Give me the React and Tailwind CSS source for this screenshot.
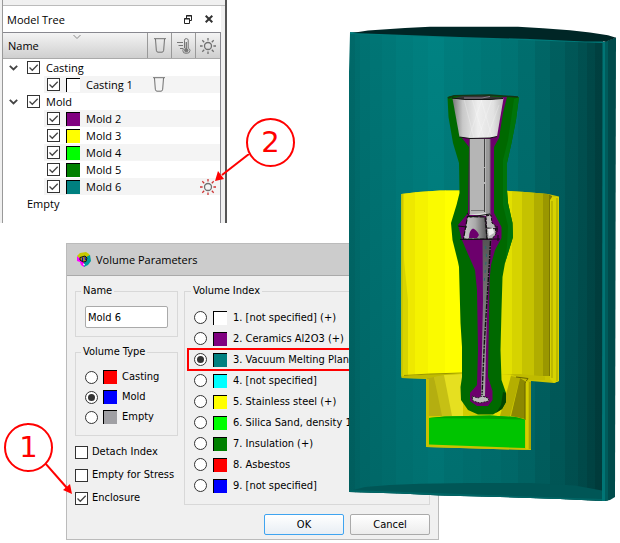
import React from "react";

function Check({ id, label, checked }) {
  return (
    <span className="grid size-[13px] shrink-0 place-items-center">
      <input
        id={id}
        type="checkbox"
        aria-label={label}
        defaultChecked={checked}
        className="peer col-start-1 row-start-1 size-[13px] appearance-none border border-[#333] bg-white"
      />
      <svg
        viewBox="0 0 13 13"
        className="pointer-events-none invisible col-start-1 row-start-1 size-[13px] peer-checked:visible"
        fill="none"
        stroke="#444"
        strokeWidth="1.3"
      >
        <path d="M2.5 6.5 5.3 9.3 10.7 3.8" />
      </svg>
    </span>
  );
}

function Radio({ id, name, checked }) {
  return (
    <span className="grid size-[13px] shrink-0 place-items-center">
      <input
        id={id}
        name={name}
        type="radio"
        defaultChecked={checked}
        className="peer col-start-1 row-start-1 size-[13px] appearance-none rounded-full border border-[#333] bg-white"
      />
      <span className="pointer-events-none invisible col-start-1 row-start-1 size-[7px] rounded-full bg-[#333] peer-checked:visible" />
    </span>
  );
}

function Swatch({ color }) {
  return <span className={`size-[14px] shrink-0 border-t border-l border-black ${color}`} />;
}

function CupIcon() {
  return (
    <svg viewBox="0 0 12 15" className="h-[15px] w-3" fill="none" stroke="#707070">
      <path d="M0 .7H12M1.5 1 2.3 12.2Q2.5 14.2 4 14.2H8Q9.5 14.2 9.7 12.2L10.5 1" />
    </svg>
  );
}

function ThermoIcon() {
  return (
    <svg viewBox="0 0 14 16" className="h-4 w-3.5" fill="none" stroke="#777">
      <path d="M0 4.5H6M1.5 7.5H6M3 10.5H6" />
      <path d="M7.5 10V2.2Q7.5 .6 9.3 .6T11.2 2.2V10Q13 11 13 12.5Q13 15.4 9.3 15.4T5.8 12.5Q5.8 11 7.5 10Z" />
      <path d="M9.3 4V11" strokeWidth="1.3" />
      <circle cx="9.3" cy="12.3" r="1.7" fill="#777" />
    </svg>
  );
}

function SunIcon({ rays }) {
  return (
    <svg viewBox="0 0 16 16" className="size-4" fill="none">
      <circle cx="8" cy="8" r="3.5" stroke="#707070" strokeWidth="1.3" />
      <path
        d="M8 0V2.6M8 13.4V16M0 8H2.6M13.4 8H16M2.3 2.3 4.2 4.2M11.8 11.8 13.7 13.7M13.7 2.3 11.8 4.2M4.2 11.8 2.3 13.7"
        stroke={rays}
        strokeWidth="1.3"
      />
    </svg>
  );
}

const volumes = [
  { name: "Casting 1", color: "bg-white", cup: true, shade: true },
  { name: "Mold 2", color: "bg-[#800080]", shade: true },
  { name: "Mold 3", color: "bg-[#ffff00]" },
  { name: "Mold 4", color: "bg-[#00ff00]", shade: true },
  { name: "Mold 5", color: "bg-[#008000]" },
  { name: "Mold 6", color: "bg-[#008080]", sun: true, shade: true },
];

function TreeGroup({ name }) {
  return (
    <div className="flex h-[17px] items-center pl-1.5">
      <svg viewBox="0 0 9 6" className="h-1.5 w-[9px]" fill="none" stroke="#444" strokeWidth="1.8">
        <path d="M.8 .8 4.5 4.5 8.2 .8" />
      </svg>
      <label className="ml-[9px] flex items-center gap-1.5">
        <Check label={name} checked />
        {name}
      </label>
    </div>
  );
}

function TreeItem({ item }) {
  return (
    <div className={`ml-[41px] flex h-[17px] items-center pl-[3px] ${item.shade ? "bg-[#f4f4f4]" : ""}`}>
      <label className="flex flex-1 items-center gap-1.5">
        <Check label={item.name} checked />
        <Swatch color={item.color} />
        {item.name}
      </label>
      <span className="flex w-6 justify-center">{item.cup && <CupIcon />}</span>
      <span className="w-6" />
      <span className="flex w-[25px] justify-center">{item.sun && <SunIcon rays="#c33" />}</span>
    </div>
  );
}

function ModelTree() {
  return (
    <section className="flex h-[223px] w-[227px] border-r-2 border-[#555] bg-[#f0f0f0] pl-0.5 font-['Open_Sans','Noto_Sans',sans-serif] text-[11px] leading-[17px] text-black">
      <div className="flex flex-1 flex-col border-l border-[#999]">
        <div className="h-1.5 border-b border-[#bbb]" />
        <div className="mr-1 flex flex-1 flex-col bg-white">
          <header className="flex h-[26px] items-center pr-2 pl-1">
            <h2 className="flex-1">Model Tree</h2>
            <button aria-label="Float" className="mr-[13px]">
              <svg viewBox="0 0 8 9" className="h-[9px] w-2" fill="none" stroke="#222">
                <path d="M2.5 3V.5H7.5V5.5H6M2 1H8M0 4H6" />
                <path d="M.5 3.5H5.5V8.5H.5Z" />
              </svg>
            </button>
            <button aria-label="Close">
              <svg viewBox="0 0 8 8" className="size-2" stroke="#333" strokeWidth="2">
                <path d="M.7 .7 7.3 7.3M7.3 .7 .7 7.3" />
              </svg>
            </button>
          </header>
          <div className="flex-1 border-t border-r border-[#88888f]">
            <div className="flex h-[26px] border-b border-[#aaa] bg-linear-to-b from-[#f4f4f4] to-[#cfcfcf]">
              <div className="relative flex flex-1 items-center pl-[5px]">
                Name
                <svg viewBox="0 0 8 4" className="absolute top-0.5 left-[70px] h-1 w-2" fill="none" stroke="#888">
                  <path d="M.5 0 4 3.5 7.5 0" />
                </svg>
              </div>
              <div className="flex w-6 items-center justify-center border-l border-[#999]">
                <CupIcon />
              </div>
              <div className="flex w-6 items-center justify-center border-l border-[#999]">
                <ThermoIcon />
              </div>
              <div className="flex w-[25px] items-center justify-center border-l border-[#999]">
                <SunIcon rays="#707070" />
              </div>
            </div>
            <TreeGroup name="Casting" />
            <TreeItem item={volumes[0]} />
            <TreeGroup name="Mold" />
            {volumes.slice(1).map((v) => (
              <TreeItem key={v.name} item={v} />
            ))}
            <div className="pl-6">Empty</div>
          </div>
        </div>
      </div>
    </section>
  );
}

const types = [
  { name: "Casting", color: "bg-[#ff0000]" },
  { name: "Mold", color: "bg-[#0000ff]" },
  { name: "Empty", color: "bg-[#a0a0a4]" },
];

const indices = [
  { name: "1. [not specified] (+)", color: "bg-white" },
  { name: "2. Ceramics Al2O3 (+)", color: "bg-[#800080]" },
  { name: "3. Vacuum Melting Plant", color: "bg-[#008080]" },
  { name: "4. [not specified]", color: "bg-[#00ffff]" },
  { name: "5. Stainless steel (+)", color: "bg-[#ffff00]" },
  { name: "6. Silica Sand, density 1600", color: "bg-[#00ff00]" },
  { name: "7. Insulation (+)", color: "bg-[#008000]" },
  { name: "8. Asbestos", color: "bg-[#ff0000]" },
  { name: "9. [not specified]", color: "bg-[#0000ff]" },
];

const flags = ["Detach Index", "Empty for Stress", "Enclosure"];

function AppIcon() {
  return (
    <svg viewBox="0 0 16 16" className="size-4">
      <path d="M1 4 4 1 10 0 13 2 14 4 8 6 3 6Z" fill="#c8c800" />
      <path d="M1 4 3 6 8 8V15L5 13 4 10 1 9Z" fill="#f0f" />
      <path d="M14 3 15 9 12 13 8 15V7L10 5Z" fill="#009a9a" />
      <path d="M4 5.5 9 4 11 6 10 9.5 7 10 4 8Z" fill="#a89020" stroke="#111" />
      <path d="M6.5 5.5V9M9 5 9.5 8" stroke="#00c" />
      <path d="M7 12 9 13" stroke="#fff" />
    </svg>
  );
}

function VolumeParameters() {
  return (
    <section className="ml-[66px] w-[373px] border border-[#bbb] bg-[#f0f0f0] font-['DejaVu_Sans_Condensed','DejaVu_Sans',sans-serif] text-[11px] leading-4 text-black">
      <header className="flex h-8 items-center gap-1 border-b border-[#aaa] bg-[#ccc] pl-[9px] font-['Open_Sans','Noto_Sans',sans-serif]">
        <AppIcon />
        <h2>Volume Parameters</h2>
      </header>
      <form className="px-2 pt-[7px] pb-1" onSubmit={(e) => e.preventDefault()}>
        <div className="flex items-start gap-1.5">
          <div className="w-[103px]">
            <fieldset className="h-[54px] border border-[#d8d8d8] px-[9px]">
              <legend className="-ml-1 px-0.5">
                <label htmlFor="volume-name">Name</label>
              </legend>
              <input
                id="volume-name"
                defaultValue="Mold 6"
                className="mt-[7px] block h-[22px] w-full rounded-xs border border-[#aaa] bg-white px-0.5"
              />
            </fieldset>
            <fieldset className="mt-[7px] h-[92px] border border-[#d8d8d8] px-[9px]">
              <legend className="-ml-1 px-0.5">Volume Type</legend>
              <div className="mt-[9px] flex flex-col gap-1">
                {types.map((t) => (
                  <label key={t.name} className="flex items-center gap-[5px]">
                    <Radio name="type" checked={t.name === "Mold"} />
                    <Swatch color={t.color} />
                    {t.name}
                  </label>
                ))}
              </div>
            </fieldset>
            <div className="mt-2 flex flex-col gap-[7px]">
              {flags.map((f) => (
                <label key={f} className="flex items-center gap-1 whitespace-nowrap">
                  <Check label={f} checked={f === "Enclosure"} />
                  {f}
                </label>
              ))}
            </div>
          </div>
          <fieldset className="h-[222px] min-w-0 flex-1 overflow-hidden border border-[#d8d8d8] px-0.5">
            <legend className="ml-1 px-0.5">Volume Index</legend>
            <div className="mt-2">
              {indices.map((v, i) => (
                <label
                  key={v.name}
                  className={`flex items-center gap-1.5 pl-[5px] whitespace-nowrap ${
                    i === 2 ? "-my-px h-[23px] border-2 border-[#f00]" : "h-[21px] border-x-2 border-transparent"
                  }`}
                >
                  <Radio name="index" checked={i === 2} />
                  <Swatch color={v.color} />
                  {v.name}
                </label>
              ))}
            </div>
          </fieldset>
        </div>
        <div className="mt-2 flex justify-end gap-1.5">
          <button className="h-[21px] w-20 rounded-xs border border-[#3fa4f0] bg-linear-to-b from-white to-[#e8eef4]">
            OK
          </button>
          <button type="button" className="h-[21px] w-20 rounded-xs border border-[#aaa] bg-linear-to-b from-white to-[#ececec]">
            Cancel
          </button>
        </div>
      </form>
    </section>
  );
}

const tealFacets = [
  [349, 6, "#006969"], [355, 5, "#006e6e"], [360, 10, "#007272"], [370, 12, "#007575"],
  [382, 14, "#007878"], [396, 17, "#007c7c"], [413, 15, "#007f7f"], [428, 16, "#008282"],
  [444, 19, "#007d7d"], [463, 18, "#007a7a"], [481, 20, "#007777"], [501, 17, "#007474"],
  [518, 17, "#006e6e"], [535, 15, "#006666"], [550, 15, "#005f5f"], [565, 13, "#005757"],
  [578, 9, "#005050"], [587, 8, "#004848"], [595, 8, "#004040"],
];

const yellowFacets = [
  [401, 14, "#eee800"], [415, 13, "#f5f200"], [428, 17, "#fafa00"], [445, 30, "#ffff00"],
  [475, 37, "#e2e000"], [512, 10, "#d6d300"], [522, 12, "#c5c200"], [534, 9, "#b0ad00"],
  [543, 6, "#9a9700"], [549, 3, "#7c7900"],
];

function MoldModel() {
  return (
    <svg
      viewBox="345 20 275 485"
      role="img"
      aria-label="Sectioned mold assembly"
      className="absolute top-5 left-[345px] h-[485px] w-[275px]"
    >
      <defs>
        <clipPath id="tank-clip">
          <path d="M350 33 603 42V501L560 499 500 497 440 495.5 400 493.5 349 492V72Z" />
        </clipPath>
        <clipPath id="box-clip">
          <path d="M401.5 194 418 192 440 190.5H500L525 192 548 194 552 196V377H401.5Z" />
        </clipPath>
        <linearGradient id="depth-fill" x1="0" y1="0" x2="0" y2="1">
          <stop offset="0" stopColor="#001f1f" stopOpacity="0" />
          <stop offset="1" stopColor="#001f1f" stopOpacity=".16" />
        </linearGradient>
        <linearGradient id="cup-fill">
          <stop offset="0" stopColor="#777" />
          <stop offset=".2" stopColor="#c8c8c8" />
          <stop offset=".5" stopColor="#eee" />
          <stop offset=".8" stopColor="#e2e2e2" />
          <stop offset="1" stopColor="#bbb" />
        </linearGradient>
        <linearGradient id="joint-fill">
          <stop offset="0" stopColor="#ccc" />
          <stop offset=".5" stopColor="#aaa" />
          <stop offset="1" stopColor="#555" />
        </linearGradient>
        <linearGradient id="blade-fill" x1="0" y1="0" x2="0" y2="1">
          <stop offset="0" stopColor="#555" />
          <stop offset="1" stopColor="#aaa" />
        </linearGradient>
      </defs>

      <g clipPath="url(#tank-clip)">
        {tealFacets.map(([x, w, c]) => (
          <rect key={x} x={x} y="30" width={w + 0.5} height="475" fill={c} />
        ))}
        <rect x="349" y="30" width="256" height="475" fill="url(#depth-fill)" />
        <path d="M349 491 365 487 390 485 420 483.8 470 483H530L575 485.5 602 490.5V505H349Z" fill="#005656" />
        <path d="M349 491 603 500" stroke="#006565" strokeWidth="2" />
      </g>
      <path d="M350 33 603 42" stroke="#007b7b" strokeWidth="2" />
      <path d="M602.5 42 605 41.5V501H602Z" fill="#007575" />
      <path d="M605 41.5 616 37.5 615 497 610 500 605 501Z" fill="#004b4b" />
      <path d="M605 41.5 608 40.5V500.5L605 501Z" fill="#005c5c" />
      <path d="M352 33 368 30.5 405 28 430 26.7H518L543 28.3 570 30.3 590 32.5 608 35.3 616 37.8 606 41.5 585 41.5 530 39 460 37 400 34.8Z" fill="#002626" />

      <path d="M401.5 194 418 192 440 190.5H500L525 192 548 194 559 196.5V381L554 383 531 381V450L426 447V379L401.5 378Z" fill="#c9c400" />
      <g clipPath="url(#box-clip)">
        {yellowFacets.map(([x, w, c]) => (
          <rect key={x} x={x} y="188" width={w + 0.5} height="188" fill={c} />
        ))}
        <path d="M401 194V378H403.5V194Z" fill="#cdc800" />
        <path d="M403 250 408 300V376H403Z" fill="#d8d400" />
      </g>
      <path d="M550 200 552 197 559 197V381L554 383 550 379Z" fill="#d6d200" />
      <path d="M552 201V378M557 198V381" stroke="#a39f00" />
      <path d="M402 376.5 430 374H520L545 376.5V380L526 380 402 378Z" fill="#c0bb00" />
      <path d="M404 375.5 430 374 462 373" stroke="#999500" fill="none" />

      <path d="M427 378 462 374H510L525 380V420H427Z" fill="#d2cc00" />
      <path d="M427 378 434 377 444 416H427Z" fill="#b4ae10" />
      <path d="M434 377 444 375 456 416H442Z" fill="#c6c014" />
      <path d="M444 375 463 374V416H452Z" fill="#e6e020" />
      <path d="M500 374 511 375 503 416H490Z" fill="#e4de00" />
      <path d="M511 376 520 378 510 416H500Z" fill="#b4af00" />
      <path d="M520 378 525 381V419L511 416Z" fill="#8c8800" />
      <path d="M516 377 528 378.5 525 383V420" stroke="#6a6500" fill="none" />
      <path d="M426 379V447L531 450V381H526V448L429 445V379Z" fill="#c8c000" />
      <path d="M527 382V449" stroke="#e0dc00" />
      <path d="M530 382V449" stroke="#8f8900" />
      <path d="M429 418 445 416.5 490 415.5 515 417 525 419.5V448L470 446 429 444.5Z" fill="#00c400" />
      <path d="M429 418 445 416.5 490 415.5 515 417 525 419.5 500 419Z" fill="#00a400" />

      <path d="M447.5 97 450 96 470 95 503 96 519 97 516 120 511.5 143 507 163V190L508 203 512.5 223 513 237 509 250 505 263 502.5 277 501.5 310 500.5 350 501.5 380 506 393V402L502 409 493 414.5H478L468 410 461 400 460.5 387 462 377V347L460.5 323 459 267 458 262 452.5 240 451 223 456.5 205 459.5 193 459 163 453 143 448.5 117Z" fill="#006900" />
      <path d="M514 99 519 97 516 120 511.5 143 507 163V190L508 203 512.5 223 513 237 509 250 505 263 507 245 508 226 503 205V160L508 140Z" fill="#00740a" />
      <path d="M506 393V402L502 409 496 413 501 405 503 392Z" fill="#004500" />
      <path d="M448 98 454 95.8 490 95 518 97" stroke="#143414" fill="none" strokeWidth="1.5" />
      <path d="M502 97H507L503 113 499 138 494 147V213L501.5 227V238L495 250 491 265 489.5 280 489 317 488 377 492.5 391V400L488 406H477L470 401V393L477 385 478 350 477 290 475 270 467.5 253 462 240 458 225 468 213 469 147 462 138 465 130Z" fill="#6c006c" />

      <path d="M452.5 98.5H503.5L497 136.5 490 138 470 138.5 459.5 137Z" fill="url(#cup-fill)" />
      <g stroke="#fff" strokeOpacity=".35" strokeWidth=".7" fill="none">
        <path d="M464 99 474 138M472 99 484 138M481 99 492 137M492 99 478 138M482 99 469 138M499 105 487 138" />
      </g>
      <path d="M452.5 98.5 462 96 482 95.5 504 97.5 490 100 465 99.5Z" fill="#333" />
      <path d="M464 98H482L490 96.5" stroke="#8a7a8a" fill="none" />
      <path d="M452 98 465 99.5 490 99.5 503 98.5M459.5 137 470 138.5 490 138 497 136.5" stroke="#111" fill="none" />

      <path d="M469.5 139H490V215H469.5Z" fill="#b5b5b5" />
      <path d="M486 139H490V215H486Z" fill="#999" />
      <path d="M490 139V215" stroke="#777" />
      <path d="M484.5 139V215" stroke="#444" strokeDasharray="28 1 14 2" />
      <path d="M469.5 139V214" stroke="#444" strokeWidth=".8" />
      <path d="M471 210.5H484" stroke="#777" />
      <path d="M469 214.5 486 213V216Z" fill="#ddd" />
      <path d="M486 216 491 215 492 223 495 225 496 234 492 239H487Z" fill="#b9b9b9" stroke="#111" strokeDasharray="3 1" />
      <path d="M467.5 216.5 485 217 487 239 463.5 239Z" fill="url(#joint-fill)" stroke="#111" strokeWidth="1.2" strokeDasharray="5 1" />
      <path d="M469 238Q469 230 473 228.5Q477 230 479 235L477 238Z" fill="#6c006c" />
      <path d="M458 226 467 227M460 239.5 500 239M487 228 498 229M497 226V232M498 235V241M467 213 470 217 490 214" stroke="#111" fill="none" />
      <path d="M488 229 493 228 494 233 489 236Z" fill="#eee" />

      <path d="M482.5 240H491.5L490 257 487.5 300 486 350 485 396H481L482 350 483 300Z" fill="url(#blade-fill)" />
      <path d="M490.5 241 489.5 260 487 300 484.5 340 482 395" stroke="#111" fill="none" strokeWidth="1.4" strokeDasharray="5 1 2 1" />
      <path d="M485.5 246 486.5 256 484 285" stroke="#286b70" fill="none" strokeDasharray="3 5" />
      <path d="M472 396 478 398 482 396 488 398 489 401 480 403 473 401Z" fill="#bbb" stroke="#222" strokeDasharray="2 1" />
    </svg>
  );
}

function Callout({ children, place }) {
  return (
    <span
      className={`absolute flex size-[49px] items-center justify-center rounded-full border-2 border-[#f00] font-['DejaVu_Sans',sans-serif] text-[29px] leading-none text-[#f00] ${place}`}
    >
      {children}
    </span>
  );
}

export default function App() {
  return (
    <main className="relative min-h-screen overflow-hidden bg-white">
      <div className="flex flex-col gap-5">
        <ModelTree />
        <VolumeParameters />
      </div>
      <MoldModel />
      <Callout place="top-[118px] left-[246px]">2</Callout>
      <svg viewBox="0 0 36 28" className="absolute top-[154px] left-[215px] h-7 w-9">
        <path d="M34 0 7 21" stroke="#f00" strokeWidth="2" />
        <path d="M0 27 3 17 9 25Z" fill="#f00" />
      </svg>
      <Callout place="top-[423px] left-1">1</Callout>
      <svg viewBox="0 0 28 32" className="absolute top-[463px] left-[45px] h-8 w-7">
        <path d="M0 0 22 25" stroke="#f00" strokeWidth="2" />
        <path d="M27 31 18 27 25 21Z" fill="#f00" />
      </svg>
    </main>
  );
}
